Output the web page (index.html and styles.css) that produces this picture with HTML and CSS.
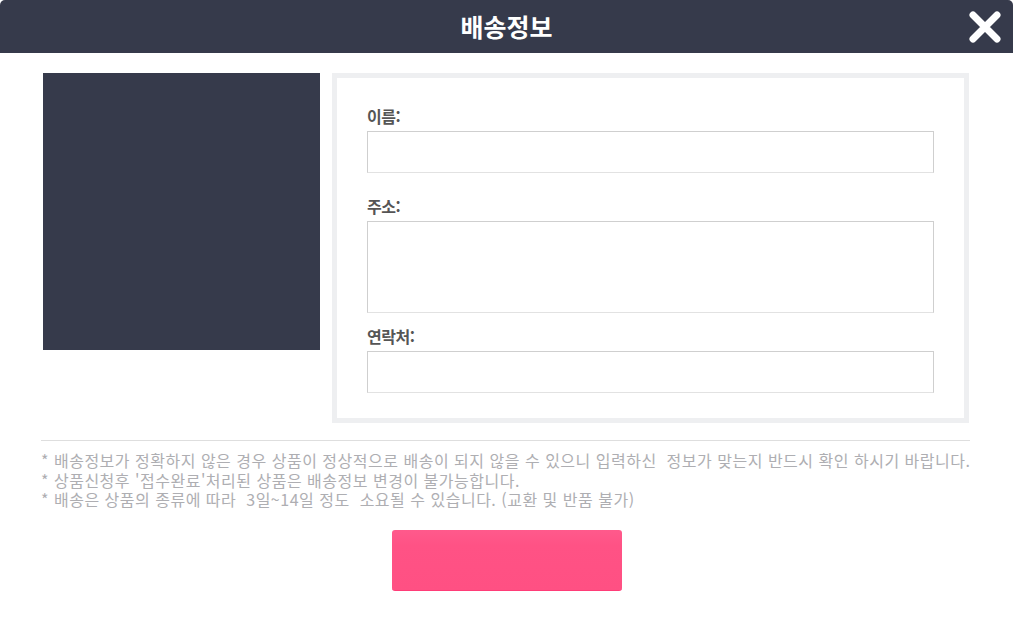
FILE: index.html
```html
<!DOCTYPE html>
<html lang="ko">
<head>
<meta charset="utf-8">
<title>배송정보</title>
<link rel="stylesheet" href="styles.css">
</head>
<body>
<div class="modal">
  <header class="modal-header">
    <h1 class="modal-title">배송정보</h1>
    <button class="close-btn" aria-label="닫기">
      <svg width="34" height="34" viewBox="0 0 34 34"><path d="M5 5 L29 29 M29 5 L5 29" stroke="#fff" stroke-width="7" stroke-linecap="round" fill="none"/></svg>
    </button>
  </header>
  <main class="modal-body">
    <div class="top-row">
      <div class="thumb"></div>
      <div class="form-panel">
        <label class="field-label">이름:</label>
        <input class="field-input field-name" type="text">
        <label class="field-label">주소:</label>
        <textarea class="field-input field-addr"></textarea>
        <label class="field-label">연락처:</label>
        <input class="field-input" type="text">
      </div>
    </div>
    <div class="notes">
      <p>* 배송정보가 정확하지 않은 경우 상품이 정상적으로 배송이 되지 않을 수 있으니 입력하신&nbsp; 정보가 맞는지 반드시 확인 하시기 바랍니다.</p>
      <p>* 상품신청후 '접수완료'처리된 상품은 배송정보 변경이 불가능합니다.</p>
      <p>* 배송은 상품의 종류에 따라&nbsp; 3일~14일 정도&nbsp; 소요될 수 있습니다. (교환 및 반품 불가)</p>
    </div>
    <div class="actions">
      <button class="submit-btn"></button>
    </div>
  </main>
</div>
</body>
</html>
```
FILE: styles.css
```css
* { box-sizing: border-box; }
html, body { margin: 0; padding: 0; background: #fff; }
body { font-family: "Noto Sans CJK KR", "Noto Sans", sans-serif; width: 1013px; height: 617px; overflow: hidden; }

.modal-header {
  height: 53px;
  background: #363a4b;
  border-radius: 5px 5px 0 0;
  display: flex;
  align-items: center;
  justify-content: center;
  position: relative;
}
.modal-title {
  margin: 0;
  color: #fff;
  font-size: 25px;
  font-weight: 700;
  letter-spacing: 0;
  line-height: 1;
}
.close-btn {
  position: absolute;
  right: 11px;
  top: 10px;
  width: 34px;
  height: 34px;
  padding: 0;
  border: 0;
  background: none;
  display: block;
}
.close-btn svg { display: block; }

.modal-body { padding: 20px 44px 0 43px; }
.top-row { display: flex; gap: 12px; align-items: flex-start; }
.thumb { width: 277px; height: 277px; background: #363a4b; flex: none; }
.form-panel {
  width: 637px;
  height: 350px;
  border: 5px solid #eeeff1;
  padding: 28px 30px 0 30px;
  display: flex;
  flex-direction: column;
}
.field-label {
  display: block;
  font-size: 16px;
  font-weight: 700;
  color: #555;
  line-height: 20px;
  height: 20px;
  margin-bottom: 5px;
  letter-spacing: -0.5px;
}
.field-input {
  display: block;
  width: 567px;
  height: 42px;
  border: 1px solid #cfcfcf;
  border-bottom-color: #e2e2e2;
  background: #fff;
  margin: 0;
  padding: 0;
  font: inherit;
  resize: none;
  outline: none;
}
.field-name { margin-bottom: 23px; }
.field-addr { height: 92px; margin-bottom: 13px; }

.notes {
  margin-top: 17px;
  border-top: 1px solid #dedede;
  padding-top: 10px;
  margin-left: -2px;
  margin-right: -1px;
}
.notes p {
  margin: 0;
  font-size: 16px;
  line-height: 19.5px;
  color: #aeaeb2;
  letter-spacing: 0.5px;
  white-space: nowrap;
}
.actions { display: flex; justify-content: center; margin-top: 20px; margin-left: -43px; margin-right: -44px; }
.submit-btn {
  width: 230px;
  height: 61px;
  border: 0;
  border-radius: 3px;
  background: linear-gradient(#ff5a8c, #ff5285 25%, #ff5083);
  border-bottom: 1px solid #ff3d78;
  padding: 0;
}
```
